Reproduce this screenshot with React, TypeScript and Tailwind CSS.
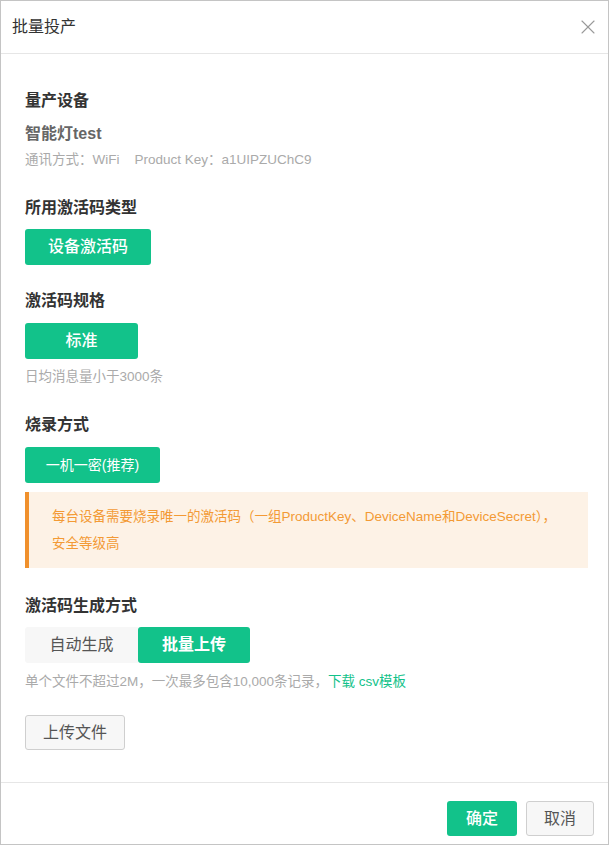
import { X } from "lucide-react";

const font = "font-['Liberation_Sans','Noto_Sans_CJK_SC',sans-serif]";

function Heading({ children, className = "" }: { children: React.ReactNode; className?: string }) {
  return (
    <div className={`text-[16px] leading-[24px] font-semibold text-[#333] ${className}`}>{children}</div>
  );
}

function GreenButton({
  children,
  className = "",
}: {
  children: React.ReactNode;
  className?: string;
}) {
  return (
    <div
      className={`flex h-[36px] items-center justify-center whitespace-nowrap rounded-[3px] bg-[#12c28a] text-white ${className}`}
    >
      {children}
    </div>
  );
}

export default function App() {
  return (
    <div className={`${font} flex h-[845px] w-[609px] flex-col border border-[#c4c4c4] bg-white`}>
      {/* header */}
      <div className="flex h-[53px] shrink-0 items-center justify-between border-b border-[#e6e6e6] pl-[11px] pr-[8px]">
        <div className="text-[16px] leading-[24px] text-[#333]">批量投产</div>
        <X className="h-[24px] w-[24px] text-[#9a9a9a]" strokeWidth={1.1} />
      </div>

      {/* body */}
      <div className="flex-1 pl-[24px] pr-[20px] pt-[35px]">
        <Heading>量产设备</Heading>
        <div className="mt-[9px] text-[16px] leading-[24px] font-semibold text-[#666]">智能灯test</div>
        <div className="mt-[4px] text-[13.5px] leading-[20px] text-[#aaa]">
          通讯方式：WiFi<span className="ml-[15px]">Product Key：a1UIPZUChC9</span>
        </div>

        <Heading className="mt-[26px]">所用激活码类型</Heading>
        <GreenButton className="mt-[9px] w-[126px] text-[16px] font-medium">设备激活码</GreenButton>

        <Heading className="mt-[24px]">激活码规格</Heading>
        <GreenButton className="mt-[10px] w-[113px] text-[16px] font-medium">标准</GreenButton>
        <div className="mt-[8px] text-[13.5px] leading-[20px] text-[#aaa]">日均消息量小于3000条</div>

        <Heading className="mt-[26px]">烧录方式</Heading>
        <GreenButton className="mt-[10px] w-[135px] text-[14px]">一机一密(推荐)</GreenButton>
        <div className="mt-[9px] border-l-4 border-[#f0902c] bg-[#fdf2e6] py-[11px] pl-[23px] pr-[10px] text-[13.5px] leading-[27px] text-[#f39a35]">
          每台设备需要烧录唯一的激活码（一组ProductKey、DeviceName和DeviceSecret），
          <br />
          安全等级高
        </div>

        <Heading className="mt-[26px]">激活码生成方式</Heading>
        <div className="mt-[9px] flex">
          <div className="flex h-[36px] w-[113px] items-center justify-center rounded-l-[3px] bg-[#f7f7f7] text-[16px] text-[#555]">
            自动生成
          </div>
          <div className="flex h-[36px] w-[112px] items-center justify-center rounded-[3px] bg-[#12c28a] text-[16px] font-semibold text-white">
            批量上传
          </div>
        </div>
        <div className="mt-[9px] text-[13.5px] leading-[20px] text-[#aaa]">
          单个文件不超过2M，一次最多包含10,000条记录，
          <span className="text-[#12c28a]">下载 csv模板</span>
        </div>
        <div className="mt-[23px] flex h-[35px] w-[100px] items-center justify-center rounded-[3px] border border-[#cfcfcf] bg-[#f7f7f7] text-[16px] text-[#555]">
          上传文件
        </div>
      </div>

      {/* footer */}
      <div className="flex h-[62px] shrink-0 items-start justify-end gap-[9px] border-t border-[#e6e6e6] pr-[14px] pt-[18px]">
        <div className="flex h-[35px] w-[70px] items-center justify-center rounded-[3px] bg-[#12c28a] text-[16px] font-medium text-white">
          确定
        </div>
        <div className="flex h-[35px] w-[68px] items-center justify-center rounded-[3px] border border-[#cfcfcf] bg-[#f7f7f7] text-[16px] text-[#555]">
          取消
        </div>
      </div>
    </div>
  );
}
